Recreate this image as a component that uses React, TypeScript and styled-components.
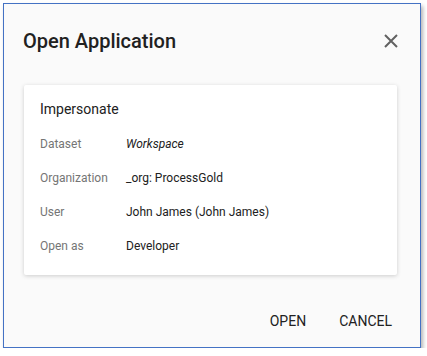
import React from 'react';
import styled, { createGlobalStyle } from 'styled-components';

const GlobalStyle = createGlobalStyle`
  html, body {
    margin: 0;
    padding: 0;
    background: #ffffff;
    font-family: Roboto, "Liberation Sans", sans-serif;
  }
`;

interface Field {
  label: string;
  value: string;
  italic?: boolean;
}

const fields: Field[] = [
  { label: 'Dataset', value: 'Workspace', italic: true },
  { label: 'Organization', value: '_org: ProcessGold' },
  { label: 'User', value: 'John James (John James)' },
  { label: 'Open as', value: 'Developer' },
];

const App = () => {
  return (
    <>
      <GlobalStyle />
      <Dialog>
        <Header>
          <Title>Open Application</Title>
          <CloseButton aria-label="close">
            <svg width="14" height="14" viewBox="0 0 14 14">
              <path d="M1 1 L13 13 M13 1 L1 13" stroke="#616161" strokeWidth="2" />
            </svg>
          </CloseButton>
        </Header>
        <Body>
          <Card>
            <CardTitle>Impersonate</CardTitle>
            {fields.map((f) => (
              <Row key={f.label}>
                <Label>{f.label}</Label>
                <Value italic={f.italic}>{f.value}</Value>
              </Row>
            ))}
          </Card>
        </Body>
        <Actions>
          <ActionButton>Open</ActionButton>
          <ActionButton>Cancel</ActionButton>
        </Actions>
      </Dialog>
    </>
  );
};

export default App;

const Dialog = styled.div`
  margin: 3px 0 0 3px;
  width: 418px;
  height: 345px;
  box-sizing: border-box;
  border: 1px solid #4472c4;
  background: #fafafa;
  box-shadow: 2px 3px 4px rgba(0, 0, 0, 0.3);
  display: flex;
  flex-direction: column;
`;

const Header = styled.div`
  display: flex;
  align-items: center;
  justify-content: space-between;
  padding: 25px 22px 0 19px;
  height: 24px;
`;

const Title = styled.div`
  font-size: 20px;
  font-weight: 500;
  line-height: 24px;
  color: #212121;
`;

const CloseButton = styled.button`
  border: none;
  background: none;
  padding: 0;
  width: 14px;
  height: 14px;
  display: flex;
  cursor: pointer;
`;

const Body = styled.div`
  padding: 32px 23px 0 20px;
`;

const Card = styled.div`
  background: #ffffff;
  border-radius: 2px;
  box-shadow: 0 1px 4px rgba(0, 0, 0, 0.18);
  padding: 16px 16px 12px;
`;

const CardTitle = styled.div`
  font-size: 14px;
  line-height: 16px;
  color: #212121;
  margin-bottom: 10px;
`;

const Row = styled.div`
  display: flex;
  align-items: center;
  height: 34px;
  font-size: 12px;
`;

const Label = styled.div`
  width: 86px;
  color: #757575;
`;

const Value = styled.div<{ italic?: boolean }>`
  color: #212121;
  font-style: ${(p) => (p.italic ? 'italic' : 'normal')};
`;

const Actions = styled.div`
  margin-top: auto;
  display: flex;
  justify-content: flex-end;
  gap: 1px;
  padding: 0 12px 8px 0;
`;

const ActionButton = styled.button`
  border: none;
  background: none;
  height: 36px;
  padding: 0 16px;
  font-family: Roboto, "Liberation Sans", sans-serif;
  font-size: 14px;
  font-weight: 400;
  text-transform: uppercase;
  color: #212121;
  cursor: pointer;
`;
